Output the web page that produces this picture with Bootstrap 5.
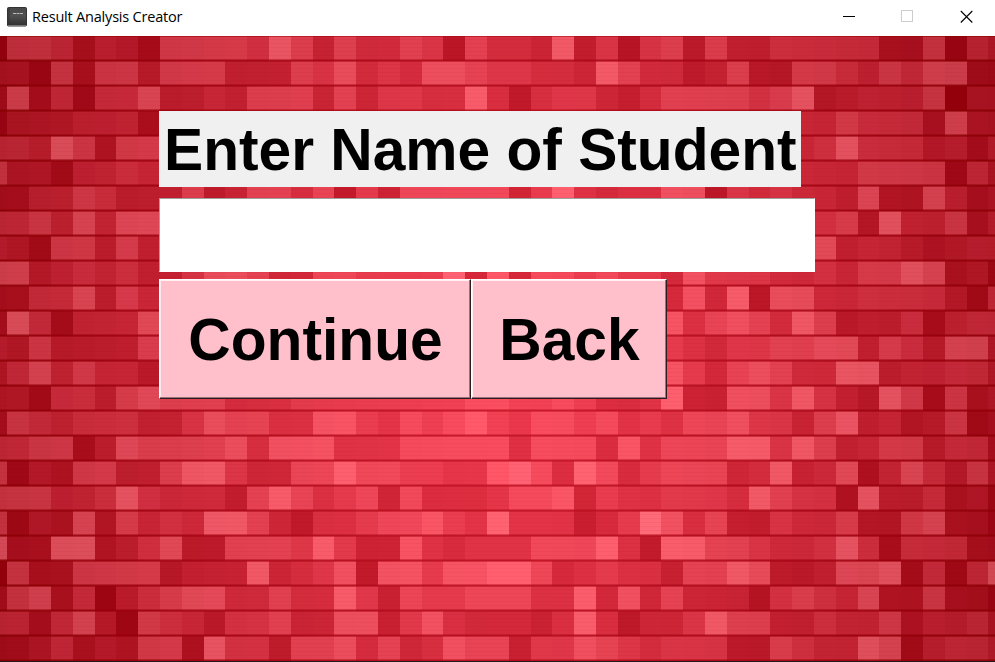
<!DOCTYPE html>
<html lang="en">
<head>
<meta charset="utf-8">
<meta name="viewport" content="width=device-width, initial-scale=1">
<title>Result Analysis Creator</title>
<link href="https://cdn.jsdelivr.net/npm/bootstrap@5.3.0/dist/css/bootstrap.min.css" rel="stylesheet">
<style>
  body { font-family: "Liberation Sans", Arial, sans-serif; color: #000; }
  .title-bar { height: 36px; padding: 0 22px 3px 7px; }
  .title-text { font: 14.5px/20px "Open Sans", "Noto Sans", sans-serif; letter-spacing: -.2px; margin-left: 5px; }
  .window-controls { gap: 46px; }
  .window-controls svg { display: block; }
  .client-area { padding: 75px 0 0 159px; }
  .mosaic { z-index: -1; }
  .big-text { font-size: 58.7px; font-weight: 700; line-height: 68px; }
  .name-label { width: 642px; height: 76px; padding: 5px 0 3px 5px; background: #f0f0f0; white-space: nowrap; }
  .name-entry { width: 656px; height: 74px; margin: 11px 0 7px; border: 1px solid; border-color: #a0a0a0 #fff #fff #a0a0a0; border-radius: 0; outline: 0; background: #fff; padding: 2px; }
  .raised { height: 120px; background: #ffc0cb; border: solid; border-width: 1px; border-color: #fff #2d1c20 #2d1c20 #fff; border-radius: 0; padding: 1px 0 0 1px; box-shadow: inset -1px -1px 0 #9a737a, inset 1px 1px 0 #fff0f2; color: #000; }
  .wide-btn { width: 312px; }
  .slim-btn { width: 196px; }
</style>
</head>
<body class="vh-100 overflow-hidden d-flex flex-column">
<header class="title-bar bg-white d-flex align-items-center justify-content-between flex-shrink-0">
  <div class="d-flex align-items-center">
    <svg width="20" height="20" viewBox="0 0 20 20" aria-hidden="true">
      <defs><linearGradient id="cover" x1="0" y1="0" x2="0" y2="1"><stop offset="0" stop-color="#484848"/><stop offset=".45" stop-color="#505050"/><stop offset="1" stop-color="#303030"/></linearGradient></defs>
      <rect x=".5" y=".5" width="19" height="18.5" rx="1" fill="url(#cover)" stroke="#333"/>
      <path d="M2 1v17" stroke="#303030"/><path d="M1 18.5h18" stroke="#777"/>
      <path d="M6 6.5h3m.5 0h2.5m.5 0h3.5" stroke="#bbb" stroke-width="1.2"/>
    </svg>
    <span class="title-text">Result Analysis Creator</span>
  </div>
  <div class="window-controls d-flex align-items-center">
    <svg width="12" height="13" aria-label="Minimize"><path d="M0 6.5h12" stroke="#000"/></svg>
    <svg width="13" height="13" aria-label="Maximize"><rect x=".5" y=".5" width="11" height="11" fill="none" stroke="#ccc"/></svg>
    <svg width="13" height="13" aria-label="Close"><path d="M.8 1l11.5 11.5M12.3 1L.8 12.5" stroke="#000" stroke-width="1.1"/></svg>
  </div>
</header>
<main class="client-area position-relative flex-grow-1">
  <canvas id="mosaic" class="mosaic position-absolute top-0 start-0" width="995" height="626"></canvas>
  <label class="name-label big-text d-block" for="studentName">Enter Name of Student</label>
  <input id="studentName" class="name-entry big-text d-block" type="text" autocomplete="off">
  <div class="d-flex">
    <button class="raised wide-btn big-text" type="button">Continue</button>
    <button class="raised slim-btn big-text" type="button">Back</button>
  </div>
</main>
<script src="https://cdn.jsdelivr.net/npm/bootstrap@5.3.0/dist/js/bootstrap.bundle.min.js"></script>
<script>
  // Brightness of every tile, 0 (dark) to 9 (light); "-" spans tiles under the form.
  const rows = [
    '1665243166665863' + '644651644382515' + '6263355555226154',
    '3316266366633365' + '745477655443864' + '4236226654657722',
    '2725155733436663' + '635544841455324' + '6666568234446033',
    '13334441-4465552733',
    '55486266-4585553424',
    '63314454-4446666153',
    '2244653336236646' + '152666662584344' + '7715454437227423',
    '55647477-5562844624',
    '43166363-5734432344',
    '7734545335776336' + '655558272665655' + '3755544546687231',
    '22557364-3738177445555315',
    '28514447-7467648623351455',
    '43633336-5435566773653773',
    '35746442-7536764488344553',
    '3315536766644455' + '555555665565334' + '8227758532861623',
    '2654555335766447' + '754656754665645' + '4667553683423612',
    '5566137666674777' + '444666663666374' + '6668858634663552',
    '6132663368853366' + '866554478638635' + '6663483471475363',
    '6664458544426864' + '562633346672544' + '5554865518335231',
    '6132726454886314' + '456675484441359' + '7462254462267221',
    '8228823572266658' + '522743444666841' + '8866544585155522',
    '0622666623338345' + '717757788634544' + '2668722377815158',
    '2672503567744644' + '852655666448373' + '6333156547226221',
    '5525730654255633' + '772574333248413' + '3586633544624453',
    '2235232661855266' + '746347662557654' + '5552265448714554'
  ].map(s => s.replace('-', '4'.repeat(48 - s.length)));

  const ctx = document.getElementById('mosaic').getContext('2d');
  const pitchX = 21.8, pitchY = 25;
  // Red glow that fades from the middle of the window to its edges.
  function glow(x, y, d) {
    const r = Math.pow(Math.hypot((x - 500) / 500, (y - 340) / 600), 1.3);
    const v = d - 4.5, up = v > 0;
    return `rgb(${240 - 55 * r + 8 * v},${60 - 28 * r + (up ? 12 : 7) * v},${80 - 33 * r + (up ? 11 : 7.5) * v})`;
  }
  rows.forEach((row, j) => {
    const top = j ? j * pitchY : 0;
    [...row].forEach((d, i) => {
      const x = Math.round(7.4 + pitchX * (i - 1));
      ctx.fillStyle = glow(x + 11, top + 12, +d);
      ctx.fillRect(x, top, 22, pitchY);
    });
    for (let y = top + 3; y < top + 22; y += 4) {
      ctx.fillStyle = 'rgba(150,0,20,.05)';
      ctx.fillRect(0, y, 995, 1);
    }
    for (let x = 0; x < 995; x += 5) {
      [[23, .45], [24, .85], [25, .4]].forEach(([dy, a]) => {
        ctx.globalAlpha = a;
        ctx.fillStyle = glow(x, top + 24, -1);
        ctx.fillRect(x, top + dy, 5, 1);
      });
      ctx.globalAlpha = 1;
    }
  });
  // Seam lines are painted again where the next row covered them.
  for (let j = 0; j < 25; j++) for (let x = 0; x < 995; x += 5) {
    ctx.globalAlpha = .55;
    ctx.fillStyle = glow(x, j * 25, -1);
    ctx.fillRect(x, j * 25, 5, 1);
  }
  ctx.globalAlpha = 1;
  ctx.fillStyle = '#241a1e';
  ctx.fillRect(0, 625, 995, 1);
</script>
</body>
</html>
